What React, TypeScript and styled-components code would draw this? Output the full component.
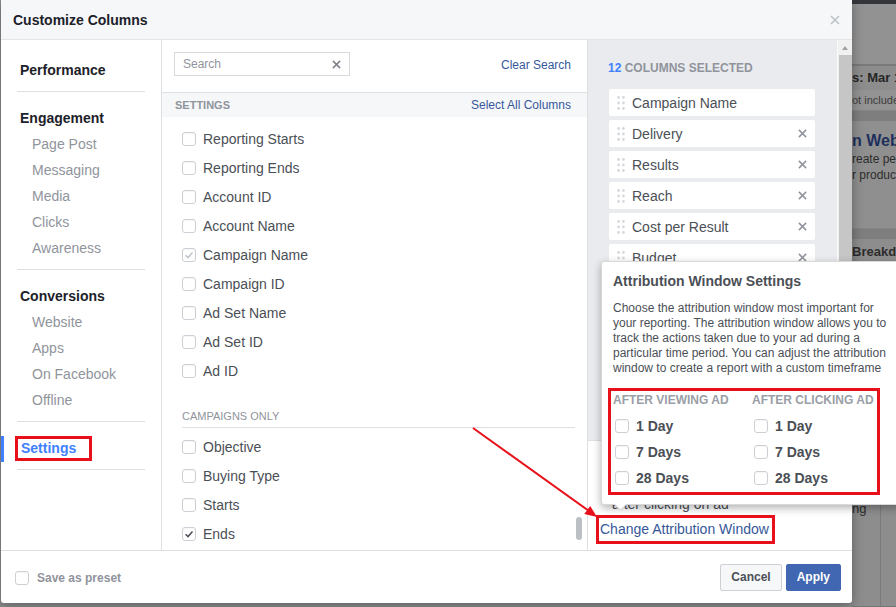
import React from 'react'
import styled, {createGlobalStyle} from 'styled-components'

/****************************************************** global ***************************************************/
const GlobalStyle = createGlobalStyle`
	html, body {
		margin: 0;
		padding: 0;
	}
	body {
		font-family: "Liberation Sans", Arial, Helvetica, sans-serif;
		background: #8d8d8d;
		overflow: hidden;
	}
	#root {
		position: relative;
		width: 896px;
		height: 607px;
		overflow: hidden;
	}
`

/****************************************************** data ***************************************************/
const navGroups = [
	{title: 'Performance', items: [], top: 18},
	{title: 'Engagement', items: ['Page Post', 'Messaging', 'Media', 'Clicks', 'Awareness'], top: 17},
	{title: 'Conversions', items: ['Website', 'Apps', 'On Facebook', 'Offline'], top: 17},
]

const settingsRows = [
	{label: 'Reporting Starts'},
	{label: 'Reporting Ends'},
	{label: 'Account ID'},
	{label: 'Account Name'},
	{label: 'Campaign Name', checked: true, muted: true},
	{label: 'Campaign ID'},
	{label: 'Ad Set Name'},
	{label: 'Ad Set ID'},
	{label: 'Ad ID'},
]

const campaignRows = [
	{label: 'Objective'},
	{label: 'Buying Type'},
	{label: 'Starts'},
	{label: 'Ends', checked: true},
]

const selectedColumns = [
	'Campaign Name', 'Delivery', 'Results', 'Reach', 'Cost per Result', 'Budget',
	'Amount Spent', 'Ends', 'Schedule', 'Frequency', 'Impressions', 'Link Clicks',
]

const windowDays = ['1 Day', '7 Days', '28 Days']

/****************************************************** small parts ***************************************************/
function Check({checked, muted}: {checked?: boolean; muted?: boolean}) {
	return (
		<CheckBox>
			{checked && (
				<svg width="10" height="10" viewBox="0 0 10 10">
					<path d="M1.6 5.3 L4 7.6 L8.5 2.5" fill="none" stroke={muted ? '#bec2c9' : '#4b4f56'} strokeWidth="1.5" />
				</svg>
			)}
		</CheckBox>
	)
}

function Cross({size = 9, color = '#90949c'}: {size?: number; color?: string}) {
	return (
		<svg width={size} height={size} viewBox="0 0 10 10">
			<path d="M1 1 L9 9 M9 1 L1 9" stroke={color} strokeWidth="1.7" />
		</svg>
	)
}

function DragHandle() {
	return (
		<svg width="8" height="14" viewBox="0 0 8 14">
			{[1.5, 7, 12.5].map((y) => (
				<g key={y} fill="#d6d9dd">
					<circle cx="1.6" cy={y} r="1.4" />
					<circle cx="6.4" cy={y} r="1.4" />
				</g>
			))}
		</svg>
	)
}

/****************************************************** component ***************************************************/
function App() {
	return (
		<>
			<GlobalStyle />
			<Backdrop>
				<Feed>
					<TopStrip />
					<Toolbar />
					<DateLine>s: Mar 1</DateLine>
					<NoteLine>ot include</NoteLine>
					<Band />
					<Card>
						<CardTitle>n Websi</CardTitle>
						<CardText>reate per</CardText>
						<CardText>r product</CardText>
					</Card>
					<Band />
					<Breakdown>Breakd</Breakdown>
					<LowerGrid>
						<LowerCell>ng</LowerCell>
						<LowerCell />
					</LowerGrid>
				</Feed>
			</Backdrop>

			<Dialog>
				<Header>
					<Title>Customize Columns</Title>
					<Cross size={10} color="#bec2c9" />
				</Header>

				<Body>
					<Nav>
						{navGroups.map((g) => (
							<NavSection key={g.title} $top={g.top}>
								<NavTitle>{g.title}</NavTitle>
								{g.items.map((i) => <NavItem key={i}>{i}</NavItem>)}
							</NavSection>
						))}
						<NavSection $top={14} $bottom={7}>
							<NavSelected>
								<Marked>Settings</Marked>
							</NavSelected>
						</NavSection>
					</Nav>

					<Middle>
						<SearchRow>
							<SearchBox>
								<span>Search</span>
								<Cross size={9} color="#7f8389" />
							</SearchBox>
							<LinkText $mt={1}>Clear Search</LinkText>
						</SearchRow>
						<SectionBand>
							<BandLabel>SETTINGS</BandLabel>
							<LinkText>Select All Columns</LinkText>
						</SectionBand>
						<RowList>
							{settingsRows.map((r) => (
								<OptionRow key={r.label}>
									<Check checked={r.checked} muted={r.muted} />
									{r.label}
								</OptionRow>
							))}
							<GroupLabel>CAMPAIGNS ONLY</GroupLabel>
							{campaignRows.map((r) => (
								<OptionRow key={r.label}>
									<Check checked={r.checked} />
									{r.label}
								</OptionRow>
							))}
						</RowList>
						<ScrollThumb />
					</Middle>

					<Right>
						<SelectedArea>
							<SelectedList>
								<SelectedTitle>
									<Count>12</Count> COLUMNS SELECTED
								</SelectedTitle>
								{selectedColumns.map((c, idx) => (
									<ColumnChip key={c}>
										<DragHandle />
										<ChipLabel>{c}</ChipLabel>
										{idx > 0 && <Cross size={9} />}
									</ColumnChip>
								))}
							</SelectedList>
							<ScrollTrack>
								<ScrollArrow />
								<ScrollBar />
							</ScrollTrack>
						</SelectedArea>
						<AttrFooter>
							<AttrNote>
								<span>1 day after viewing or 28 days</span>
								<span>after clicking on ad</span>
							</AttrNote>
							<Marked $link>Change Attribution Window</Marked>
						</AttrFooter>
					</Right>
				</Body>

				<Footer>
					<PresetLabel>
						<Check />
						Save as preset
					</PresetLabel>
					<ButtonGroup>
						<Button>Cancel</Button>
						<Button $primary>Apply</Button>
					</ButtonGroup>
				</Footer>
			</Dialog>

			<Popover>
				<PopTitle>Attribution Window Settings</PopTitle>
				<PopText>
					<span>Choose the attribution window most important for</span>
					<span>your reporting. The attribution window allows you to</span>
					<span>track the actions taken due to your ad during a</span>
					<span>particular time period. You can adjust the attribution</span>
					<span>window to create a report with a custom timeframe</span>
				</PopText>
				<WindowBox>
					{['AFTER VIEWING AD', 'AFTER CLICKING AD'].map((h) => (
						<WindowColumn key={h}>
							<WindowHead>{h}</WindowHead>
							{windowDays.map((d) => (
								<DayRow key={d}>
									<Check />
									{d}
								</DayRow>
							))}
						</WindowColumn>
					))}
				</WindowBox>
				<Notch />
			</Popover>

			<ArrowLayer width="896" height="607" viewBox="0 0 896 607">
				<line x1="473" y1="428" x2="589" y2="511" stroke="#e8111b" strokeWidth="2" />
				<polygon points="597,517 584.3,514.1 590.2,505.9" fill="#e8111b" />
			</ArrowLayer>
		</>
	)
}

/****************************************************** backdrop ***************************************************/
const Backdrop = styled.div`
	position: absolute;
	inset: 0;
	display: grid;
	grid-template-columns: 852px 1fr;
	background: #8d8d8d;
`

const Feed = styled.div`
	grid-column: 2;
	display: flex;
	flex-direction: column;
	white-space: nowrap;
	overflow: hidden;
	color: #2a2a2a;
`

const TopStrip = styled.div`
	height: 4px;
	background: #34363c;
`

const Toolbar = styled.div`
	height: 60px;
	background: #929292;
	border-bottom: 2px solid #7a7a7a;
`

const DateLine = styled.div`
	height: 24px;
	line-height: 24px;
	font-size: 13px;
	font-weight: bold;
	color: #262626;
`

const NoteLine = styled.div`
	height: 20px;
	line-height: 20px;
	font-size: 11px;
	color: #3d3d3d;
	background: #939393;
`

const Band = styled.div`
	height: 10px;
	background: #7e7e7e;
	border-top: 1px solid #858585;
`

const Card = styled.div`
	height: 97px;
	padding-top: 10px;
	background: #8f8f8f;
`

const CardTitle = styled.div`
	line-height: 20px;
	font-size: 16px;
	font-weight: bold;
	color: #1f2f5c;
`

const CardText = styled.div`
	line-height: 16px;
	font-size: 12px;
	color: #2c2c2c;
`

const Breakdown = styled.div`
	height: 22px;
	line-height: 26px;
	font-size: 13px;
	font-weight: bold;
	color: #2c2c2c;
`

const LowerGrid = styled.div`
	flex: 1;
	display: grid;
	grid-template-columns: 28px 1fr;
	border-bottom: 1px solid #777;
`

const LowerCell = styled.div`
	border-left: 1px solid #7b7b7b;
	padding-top: 240px;
	font-size: 13px;
	color: #2c2c2c;
	&:first-child { border-left: none; }
`

/****************************************************** dialog ***************************************************/
const Dialog = styled.div`
	position: absolute;
	left: 1px;
	top: 0;
	width: 851px;
	height: 603px;
	display: flex;
	flex-direction: column;
	background: #fff;
	box-shadow: 0 2px 12px rgba(0, 0, 0, 0.35);
	border-radius: 0 0 3px 3px;
	overflow: hidden;
`

const Header = styled.div`
	height: 39px;
	flex-shrink: 0;
	display: flex;
	align-items: center;
	justify-content: space-between;
	padding: 0 12px 0 12px;
	background: #f6f7f9;
	border-bottom: 1px solid #e5e5e5;
`

const Title = styled.div`
	font-size: 14px;
	font-weight: bold;
	color: #1d2129;
`

const Body = styled.div`
	height: 510px;
	display: grid;
	grid-template-columns: 161px 426px 264px;
`

/****************************************************** nav ***************************************************/
const Nav = styled.div`
	border-right: 1px solid #dddfe2;
	padding-top: 3px;
`

const NavSection = styled.div<{$top?: number; $bottom?: number}>`
	margin: 0 16px;
	padding: ${(p) => p.$top ?? 16}px 0 ${(p) => p.$bottom ?? 8}px;
	border-bottom: 1px solid #dddfe2;
`

const NavTitle = styled.div`
	padding-left: 3px;
	margin-bottom: 4px;
	line-height: 18px;
	font-size: 14px;
	font-weight: bold;
	color: #1d2129;
`

const NavItem = styled.div`
	padding-left: 15px;
	line-height: 26px;
	font-size: 14px;
	color: #90949c;
`

const NavSelected = styled.div`
	position: relative;
	height: 26px;
	display: flex;
	align-items: center;
	&::before {
		content: '';
		position: absolute;
		left: -16px;
		top: 0;
		width: 3px;
		height: 26px;
		background: #4080ff;
	}
`

const Marked = styled.div<{$link?: boolean}>`
	display: inline-block;
	margin-left: ${(p) => (p.$link ? 8 : -2)}px;
	padding: 0 ${(p) => (p.$link ? '3px 0 1px' : '13px 0 3px')};
	line-height: ${(p) => (p.$link ? 23 : 19)}px;
	border: 3px solid #e8111b;
	font-size: 14px;
	font-weight: ${(p) => (p.$link ? 'normal' : 'bold')};
	color: ${(p) => (p.$link ? '#365899' : '#4080ff')};
	align-self: flex-start;
`

/****************************************************** middle ***************************************************/
const Middle = styled.div`
	position: relative;
	border-right: 1px solid #dddfe2;
	overflow: hidden;
`

const SearchRow = styled.div`
	height: 53px;
	box-sizing: border-box;
	display: flex;
	align-items: flex-start;
	justify-content: space-between;
	padding: 12px 16px 0 12px;
	border-bottom: 1px solid #dddfe2;
`

const SearchBox = styled.div`
	width: 176px;
	height: 24px;
	box-sizing: border-box;
	display: flex;
	align-items: center;
	justify-content: space-between;
	padding: 0 8px;
	border: 1px solid #d6d9dd;
	font-size: 12px;
	color: #90949c;
`

const LinkText = styled.span<{$mt?: number}>`
	margin-top: ${(p) => p.$mt ?? 0}px;
	line-height: 24px;
	font-size: 12px;
	color: #365899;
`

const SectionBand = styled.div`
	height: 24px;
	display: flex;
	align-items: center;
	justify-content: space-between;
	padding: 0 16px 0 13px;
	background: #f6f7f9;
`

const BandLabel = styled.span`
	font-size: 11px;
	font-weight: bold;
	color: #90949c;
`

const RowList = styled.div`
	padding: 7px 12px 0 20px;
`

const OptionRow = styled.div`
	height: 29px;
	display: flex;
	align-items: center;
	gap: 7px;
	font-size: 14px;
	color: #4b4f56;
`

const GroupLabel = styled.div`
	margin: 24px 0 4px;
	padding-bottom: 4px;
	line-height: 14px;
	font-size: 11px;
	color: #90949c;
	border-bottom: 1px solid #dddfe2;
`

const ScrollThumb = styled.div`
	position: absolute;
	right: 5px;
	top: 477px;
	width: 6px;
	height: 23px;
	border-radius: 3px;
	background: #bcc0c4;
`

const CheckBox = styled.span`
	width: 14px;
	height: 14px;
	box-sizing: border-box;
	flex-shrink: 0;
	display: inline-flex;
	align-items: center;
	justify-content: center;
	border: 1px solid #ccd0d5;
	border-radius: 3px;
	background: #fff;
	box-shadow: inset 0 1px 1px rgba(0, 0, 0, 0.04);
`

/****************************************************** right ***************************************************/
const Right = styled.div`
	display: flex;
	flex-direction: column;
`

const SelectedArea = styled.div`
	height: 400px;
	display: flex;
	background: #e9ebee;
	overflow: hidden;
`

const SelectedList = styled.div`
	flex: 1;
	padding: 21px 0 0 20px;
	overflow: hidden;
`

const SelectedTitle = styled.div`
	margin-bottom: 14px;
	line-height: 14px;
	font-size: 12px;
	font-weight: bold;
	color: #90949c;
`

const Count = styled.span`
	color: #4080ff;
`

const ColumnChip = styled.div`
	width: 206px;
	height: 27px;
	box-sizing: border-box;
	margin: 0 0 4px 1px;
	display: flex;
	align-items: center;
	padding: 0 8px;
	background: #fff;
	border-radius: 2px;
	font-size: 14px;
	color: #4b4f56;
`

const ChipLabel = styled.span`
	flex: 1;
	margin-left: 7px;
`

const ScrollTrack = styled.div`
	width: 14px;
	display: flex;
	flex-direction: column;
	align-items: center;
	background: #f1f1f1;
	border-left: 1px solid #fafafa;
`

const ScrollArrow = styled.div`
	margin: 6px 0 5px;
	width: 0;
	height: 0;
	border-left: 3px solid transparent;
	border-right: 3px solid transparent;
	border-bottom: 4px solid #a3a3a3;
`

const ScrollBar = styled.div`
	width: 13px;
	flex: 1;
	background: #c6c6c6;
`

const AttrFooter = styled.div`
	flex: 1;
	display: flex;
	flex-direction: column;
	justify-content: flex-end;
	padding-bottom: 6px;
	border-top: 1px solid #dddfe2;
	background: #fff;
`

const AttrNote = styled.div`
	display: flex;
	flex-direction: column;
	margin: 0 0 2px 24px;
	line-height: 18px;
	font-size: 14px;
	color: #4b4f56;
	white-space: nowrap;
`

/****************************************************** footer ***************************************************/
const Footer = styled.div`
	flex: 1;
	display: flex;
	align-items: center;
	justify-content: space-between;
	padding: 0 11px 0 14px;
	border-top: 1px solid #dddfe2;
`

const PresetLabel = styled.div`
	display: flex;
	align-items: center;
	gap: 8px;
	margin-top: 2px;
	font-size: 12px;
	font-weight: bold;
	color: #90949c;
`

const ButtonGroup = styled.div`
	display: flex;
	gap: 4px;
`

const Button = styled.button<{$primary?: boolean}>`
	height: 27px;
	padding: 0 10px;
	border-radius: 2px;
	border: 1px solid ${(p) => (p.$primary ? '#4267b2' : '#ced0d4')};
	background: ${(p) => (p.$primary ? '#4267b2' : '#f6f7f9')};
	color: ${(p) => (p.$primary ? '#fff' : '#4b4f56')};
	font-family: "Liberation Sans", Arial, sans-serif;
	font-size: 12px;
	font-weight: bold;
`

/****************************************************** popover ***************************************************/
const Popover = styled.div`
	position: absolute;
	left: 601px;
	top: 261px;
	width: 300px;
	height: 244px;
	box-sizing: border-box;
	padding: 10px 0 0 11px;
	background: #fff;
	border: 1px solid rgba(0, 0, 0, 0.15);
	border-radius: 3px;
	box-shadow: 0 3px 8px rgba(0, 0, 0, 0.3);
	color: #4b4f56;
	white-space: nowrap;
`

const PopTitle = styled.div`
	line-height: 18px;
	font-size: 14px;
	font-weight: bold;
`

const PopText = styled.div`
	display: flex;
	flex-direction: column;
	margin-top: 11px;
	line-height: 15px;
	font-size: 12px;
`

const WindowBox = styled.div`
	width: 272px;
	box-sizing: border-box;
	margin: 12px 0 0 -5px;
	padding: 2px 0 1px 2px;
	display: grid;
	grid-template-columns: 139px 1fr;
	border: 3px solid #e8111b;
`

const WindowColumn = styled.div`
	display: flex;
	flex-direction: column;
`

const WindowHead = styled.div`
	margin-bottom: 5px;
	line-height: 15px;
	font-size: 12px;
	font-weight: bold;
	color: #9a9ea6;
`

const DayRow = styled.div`
	height: 26px;
	display: flex;
	align-items: center;
	gap: 7px;
	padding-left: 2px;
	font-size: 14px;
	font-weight: bold;
`

const Notch = styled.div`
	position: absolute;
	left: 14px;
	bottom: -5px;
	width: 8px;
	height: 8px;
	background: #fff;
	transform: rotate(45deg);
	border-right: 1px solid rgba(0, 0, 0, 0.15);
	border-bottom: 1px solid rgba(0, 0, 0, 0.15);
`

const ArrowLayer = styled.svg`
	position: absolute;
	left: 0;
	top: 0;
	pointer-events: none;
`

export default App
